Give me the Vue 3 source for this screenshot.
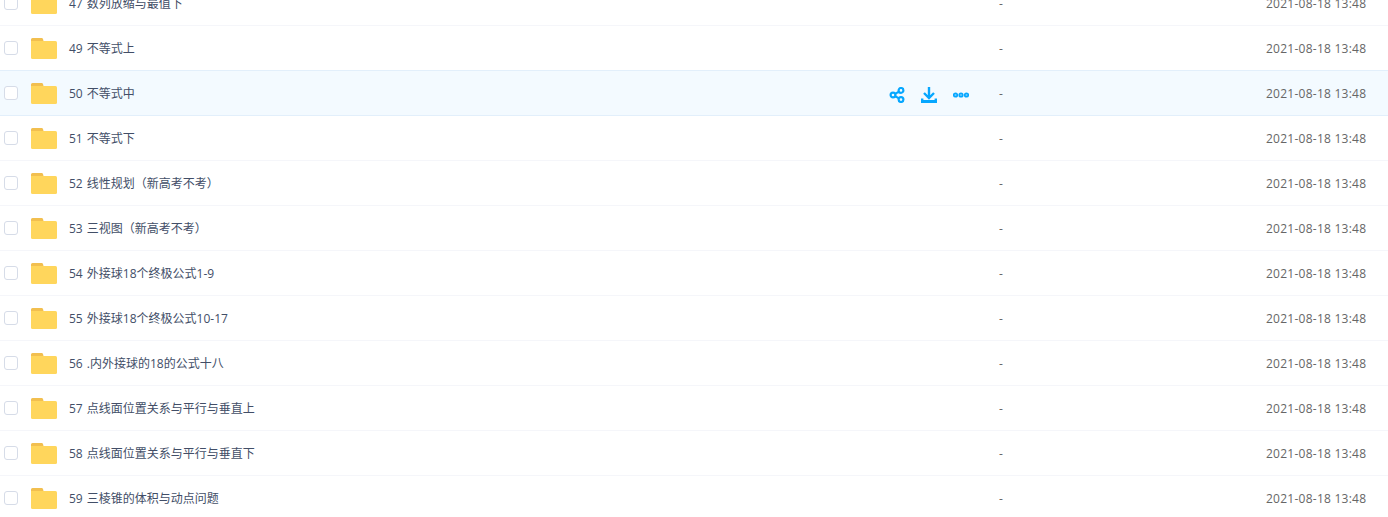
<script setup>
const names = [
  '47 数列放缩与最值下', '49 不等式上', '50 不等式中', '51 不等式下',
  '52 线性规划（新高考不考）', '53 三视图（新高考不考）', '54 外接球18个终极公式1-9',
  '55 外接球18个终极公式10-17', '56 .内外接球的18的公式十八', '57 点线面位置关系与平行与垂直上',
  '58 点线面位置关系与平行与垂直下', '59 三棱锥的体积与动点问题'
]
</script>

<template>
  <div class="list">
    <div v-for="(name, i) in names" :key="name" class="row" :class="{ active: i === 2 }">
      <span class="check"></span>
      <svg class="folder" width="26" height="22" viewBox="0 0 26 22">
        <path d="M0 1.500A1.500 1.500 0 0 1 1.500 0h9a1.500 1.500 0 0 1 1.500 1L12.500 3H0z" fill="#f2bf4f"/>
        <path d="M0 3h24.500a1.500 1.500 0 0 1 1.500 1.500v15a1.500 1.500 0 0 1-1.500 1.500h-23A1.500 1.500 0 0 1 0 19.500z" fill="#ffd65c"/>
      </svg>
      <span class="name">{{ name }}</span>
      <span v-if="i === 2" class="actions">
        <svg width="16" height="16" viewBox="0 0 16 16" fill="none" stroke="#06a7ff" stroke-width="2.200">
          <circle cx="4" cy="8" r="2.400"/><circle cx="12" cy="3.400" r="2.400"/><circle cx="12" cy="12.600" r="2.400"/>
          <path d="M6.100 6.900 10 4.600M6.100 9.100l3.900 2.300"/>
        </svg>
        <svg width="16" height="16" viewBox="0 0 16 16" fill="none" stroke="#06a7ff" stroke-width="2.400">
          <path d="M8 0v10.500M3 6l5 5 5-5"/>
          <path d="M1 11.500v3h14v-3" stroke-width="2.800"/>
        </svg>
        <svg width="16" height="16" viewBox="0 0 16 16" fill="#6cc8ff" stroke="#06a7ff" stroke-width="1.600">
          <circle cx="2.500" cy="8" r="1.800"/><circle cx="8" cy="8" r="1.800"/><circle cx="13.500" cy="8" r="1.800"/>
        </svg>
      </span>
      <span class="size">-</span>
      <span class="date">2021-08-18 13:48</span>
    </div>
  </div>
</template>

<style>
html, body { background: #fff; overflow: hidden; }
</style>

<style scoped>
.list {
  margin-top: -19px;
  font-family: "Open Sans", "Noto Sans CJK SC", sans-serif;
  font-size: 12px;
  color: #424e67;
}
.row {
  height: 45px;
  box-sizing: border-box;
  display: flex;
  align-items: center;
  border-bottom: 1px solid #f5f6fa;
  position: relative;
}
.row.active {
  background: #f3faff;
  border-bottom-color: #e2effb;
  box-shadow: 0 -1px 0 #e2effb;
}
.check {
  width: 14px;
  height: 14px;
  margin-left: 4px;
  box-sizing: border-box;
  border: 1px solid #d6dce8;
  border-radius: 3px;
  background: #fff;
  flex: none;
}
.folder { margin-left: 13px; margin-top: 2px; flex: none; }
.name { margin-left: 12px; flex: 1; word-spacing: 1px; }
.actions {
  display: flex;
  gap: 16px;
  position: absolute;
  left: 889px;
  top: 16px;
}
.size {
  width: 267px;
  color: #666;
  flex: none;
}
.date {
  width: 122px;
  flex: none;
  color: #666;
  letter-spacing: 0.25px;
}
</style>
